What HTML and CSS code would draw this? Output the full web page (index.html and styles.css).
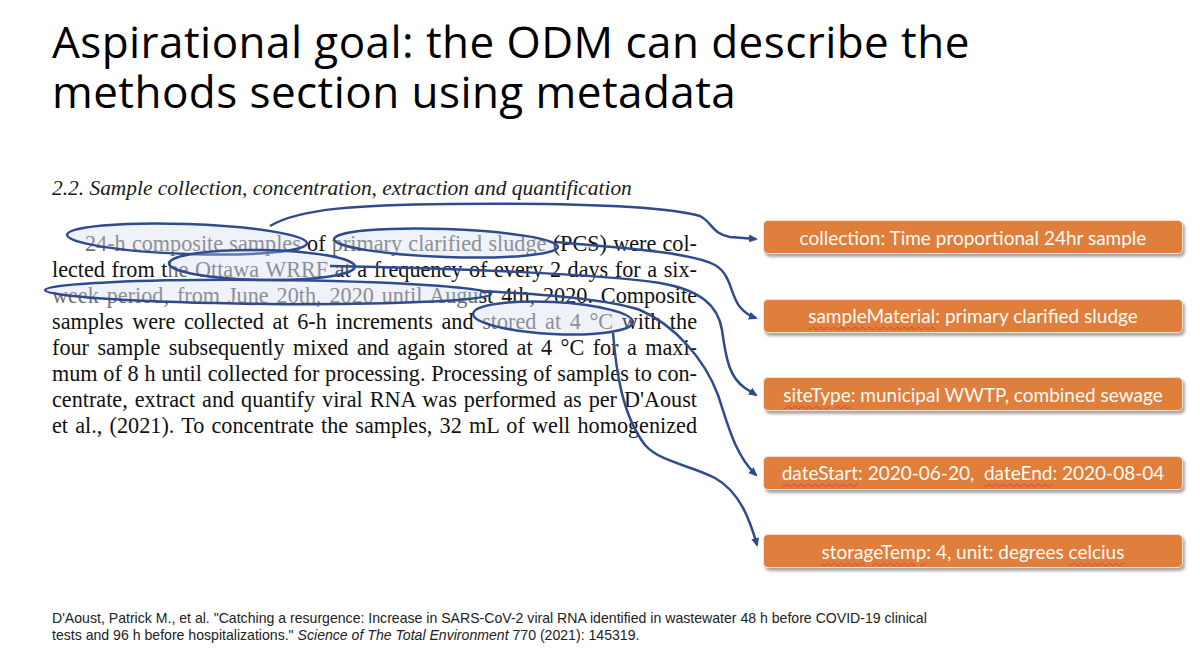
FILE: index.html
```html
<!DOCTYPE html>
<html lang="en">
<head>
<meta charset="utf-8">
<title>Aspirational goal</title>
<link rel="stylesheet" href="styles.css">
</head>
<body>
<div class="slide">
  <h1 class="title"><span class="tl">Aspirational goal: the ODM can describe the</span><span class="tl">methods section using metadata</span></h1>
  <div class="content">
    <div class="article">
      <h2 class="section-head">2.2. Sample collection, concentration, extraction and quantification</h2>
      <div class="para">
        <div class="ln first"><span class="hl">24-h composite samples</span> of <span class="hl">primary clarified sludge</span> (PCS) were col-</div>
        <div class="ln">lected from t<span class="hl">he Ottawa WRRF</span> at a frequency of every 2 days for a six-</div>
        <div class="ln"><span class="hl">week period, from June 20th, 2020 until Augu</span>st 4th, 2020. Composite</div>
        <div class="ln">samples were collected at 6-h increments and <span class="hl">stored at 4 °C</span> with the</div>
        <div class="ln">four sample subsequently mixed and again stored at 4 °C for a maxi-</div>
        <div class="ln">mum of 8 h until collected for processing. Processing of samples to con-</div>
        <div class="ln">centrate, extract and quantify viral RNA was performed as per D'Aoust</div>
        <div class="ln">et al., (2021). To concentrate the samples, 32 mL of well homogenized</div>
      </div>
    </div>
    <div class="tags">
      <div class="tag"><span class="tag-text">collection: Time proportional 24hr sample</span></div>
      <div class="tag"><span class="tag-text"><span class="sq">sampleMaterial</span>: primary clarified sludge</span></div>
      <div class="tag"><span class="tag-text"><span class="sq">siteType</span>: municipal WWTP, combined sewage</span></div>
      <div class="tag"><span class="tag-text"><span class="sq">dateStart</span>: 2020-06-20,&nbsp; <span class="sq">dateEnd</span>: 2020-08-04</span></div>
      <div class="tag"><span class="tag-text"><span class="sq">storageTemp</span>: 4, unit: degrees <span class="sq">celcius</span></span></div>
    </div>
  </div>
  <p class="cite">D'Aoust, Patrick M., et al. "Catching a resurgence: Increase in SARS-CoV-2 viral RNA identified in wastewater 48 h before COVID-19 clinical<br>tests and 96 h before hospitalizations." <i>Science of The Total Environment</i> 770 (2021): 145319.</p>

  <svg class="overlay" width="1200" height="656" viewBox="0 0 1200 656">
    <defs>
      <marker id="ah" markerWidth="10" markerHeight="10" refX="7" refY="5" orient="auto" markerUnits="userSpaceOnUse">
        <path d="M0,1 L9,5 L0,9 Z" fill="#2f4b8e"/>
      </marker>
    </defs>
    <g class="ell">
      <ellipse cx="187" cy="239" rx="120" ry="15" transform="rotate(2 187 239)"/>
      <ellipse cx="446" cy="243" rx="112" ry="14" transform="rotate(2 446 243)"/>
      <ellipse cx="262" cy="265" rx="93" ry="15" transform="rotate(1 262 265)"/>
      <ellipse cx="268" cy="292" rx="223" ry="12" transform="rotate(0.5 268 292)"/>
      <ellipse cx="553" cy="318" rx="80" ry="16" transform="rotate(3 553 318)"/>
    </g>
    <g class="con">
      <path d="M 270 226 C 300 208, 360 205, 450 204 C 560 203, 660 205, 700 216 C 712 222, 712 234, 730 237 L 756 239" marker-end="url(#ah)"/>
      <path d="M 556 242 C 620 248, 690 252, 715 265 C 732 275, 730 295, 740 307 C 745 313, 750 316, 756 318" marker-end="url(#ah)"/>
      <path d="M 330 266 C 450 268, 600 274, 660 283 C 700 290, 718 305, 722 330 C 726 360, 730 378, 745 388 L 756 395" marker-end="url(#ah)"/>
      <path d="M 480 291 C 540 294, 610 300, 640 310 C 675 325, 705 360, 718 395 C 728 425, 735 455, 756 475" marker-end="url(#ah)"/>
      <path d="M 613 333 C 616 370, 622 415, 645 445 C 660 462, 690 465, 715 478 C 740 492, 750 520, 757 545" marker-end="url(#ah)"/>
    </g>
  </svg>
</div>
</body>
</html>
```
FILE: styles.css
```css
html, body {
  margin: 0;
  padding: 0;
  background: #ffffff;
}

.slide {
  position: relative;
  width: 1200px;
  height: 656px;
  overflow: hidden;
  background: #ffffff;
}

.title {
  margin: 0;
  padding: 16px 0 0 52px;
  font-family: "Open Sans", "DejaVu Sans", sans-serif;
  font-weight: 400;
  font-size: 44px;
  color: #000000;
  letter-spacing: 0.45px;
  display: flex;
  flex-direction: column;
}

.tl {
  display: block;
  height: 50px;
  line-height: 50px;
}

.content {
  display: grid;
  grid-template-columns: 645px 420px;
  column-gap: 66px;
  padding-left: 52px;
  margin-top: 59px;
}

.article {
  width: 645px;
}

.section-head {
  margin: 0;
  font-family: "Liberation Serif", "Times New Roman", serif;
  font-style: italic;
  font-weight: 400;
  font-size: 21.4px;
  line-height: 26px;
  color: #1a1a1a;
}

.para {
  margin-top: 30px;
  font-family: "Liberation Serif", "Times New Roman", serif;
  font-size: 22.2px;
  line-height: 26px;
  color: #111111;
}

.ln {
  text-align: justify;
  text-align-last: justify;
  word-spacing: -3px;
}

.ln.first {
  padding-left: 33px;
}

.hl {
  color: #6e6e6e;
}

.tags {
  display: flex;
  flex-direction: column;
  gap: 44.5px;
  padding-top: 45px;
}

.tag {
  height: 34px;
  box-sizing: border-box;
  background: #e07e3c;
  border: 1px solid #f6e0d0;
  border-radius: 5px;
  box-shadow: 2px 3px 3px rgba(0, 0, 0, 0.35);
  display: flex;
  align-items: center;
  justify-content: center;
}

.tag-text {
  color: #fffaf5;
  font-family: Lato, "Open Sans", sans-serif;
  font-size: 19px;
  white-space: nowrap;
}

.sq {
  text-decoration: underline wavy #d9413a;
  text-decoration-thickness: 1px;
  text-underline-offset: 3px;
}

.cite {
  margin: 42px 0 0 52px;
  font-family: "Liberation Sans", Arial, sans-serif;
  font-size: 14.1px;
  line-height: 17px;
  color: #222222;
}

.overlay {
  position: absolute;
  top: 0;
  left: 0;
  pointer-events: none;
}

.ell ellipse {
  fill: rgba(205, 216, 236, 0.32);
  stroke: #2f4b8e;
  stroke-width: 2.5;
}

.con path {
  fill: none;
  stroke: #2f4b8e;
  stroke-width: 2.5;
}
```
